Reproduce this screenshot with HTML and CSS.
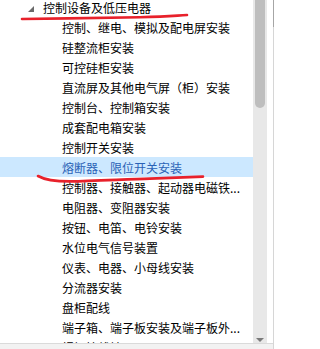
FILE: index.html
```html
<!DOCTYPE html>
<html lang="zh-CN">
<head>
<meta charset="utf-8">
<title>控制设备及低压电器</title>
<link rel="stylesheet" href="styles.css">
</head>
<body>
<div class="frame">
  <div class="main">
    <div class="content">
      <ul class="tree">
        <li class="row parent">
          <svg class="toggle" width="6" height="6" viewBox="0 0 6 6"><polygon points="6,0 6,6 0,6" /></svg>
          <span>控制设备及低压电器</span>
        </li>
        <li class="row child">控制、继电、模拟及配电屏安装</li>
        <li class="row child">硅整流柜安装</li>
        <li class="row child">可控硅柜安装</li>
        <li class="row child">直流屏及其他电气屏（柜）安装</li>
        <li class="row child">控制台、控制箱安装</li>
        <li class="row child">成套配电箱安装</li>
        <li class="row child">控制开关安装</li>
        <li class="row child selected">熔断器、限位开关安装</li>
        <li class="row child">控制器、接触器、起动器电磁铁...</li>
        <li class="row child">电阻器、变阻器安装</li>
        <li class="row child">按钮、电笛、电铃安装</li>
        <li class="row child">水位电气信号装置</li>
        <li class="row child">仪表、电器、小母线安装</li>
        <li class="row child">分流器安装</li>
        <li class="row child">盘柜配线</li>
        <li class="row child">端子箱、端子板安装及端子板外...</li>
        <li class="row child">焊铜接线端子</li>
      </ul>
      <div class="vscroll">
        <div class="thumb"></div>
        <div class="arrow-down"></div>
      </div>
    </div>
    <div class="hbar"></div>
  </div>
  <div class="edge"></div>
</div>
<svg class="marks" width="275" height="349" viewBox="0 0 275 349">
  <path d="M22 19 C 60 18.6, 110 17.8, 140 17.2 S 175 15.6, 187 15" />
  <path d="M38 176 C 45 180, 55 181.6, 72 181.4 S 125 179.4, 150 178.6 S 190 177, 203 176.6" />
</svg>
</body>
</html>
```

FILE: styles.css
```css
html, body {
  margin: 0;
  padding: 0;
  background: #ffffff;
}

body {
  width: 275px;
  height: 349px;
  overflow: hidden;
  position: relative;
  font-family: "Noto Sans CJK SC", "Microsoft YaHei", sans-serif;
  font-size: 12px;
  color: #000000;
}

.frame {
  display: flex;
  height: 349px;
}

.main {
  width: 273px;
  display: flex;
  flex-direction: column;
}

.content {
  display: flex;
  height: 343px;
  overflow: hidden;
}

.tree {
  list-style: none;
  margin: -3px 0 0 0;
  padding: 0;
  flex: 1;
  min-width: 0;
  overflow: hidden;
}

.row {
  height: 20px;
  line-height: 22px;
  white-space: nowrap;
  overflow: hidden;
}

.parent {
  display: flex;
  align-items: flex-start;
}

.toggle {
  flex: none;
  margin: 9px 9px 0 28px;
  fill: #6a6a6a;
}

.child {
  padding-left: 62px;
}

.selected {
  background: #cce8ff;
  color: #2a62b6;
}

.vscroll {
  flex: none;
  width: 14px;
  margin-right: 6px;
  background: #e8e8e8;
  display: flex;
  flex-direction: column;
  align-items: center;
  justify-content: space-between;
}

.thumb {
  width: 10px;
  height: 108px;
  background: #bebebe;
  border-radius: 0 0 5px 5px;
}

.arrow-down {
  width: 0;
  height: 0;
  border-left: 4.5px solid transparent;
  border-right: 4.5px solid transparent;
  border-top: 4px solid #7a7a7a;
  margin: 0 0 1px 0;
  position: relative;
  left: 0;
}

.hbar {
  flex: 1;
  border-top: 1px solid #dadada;
  background: #f2f2f2;
}

.edge {
  width: 1px;
  background: linear-gradient(#a6a6a6 0, #a6a6a6 27px, #d6d6d6 27px);
  margin-right: 1px;
}

.marks {
  position: absolute;
  left: 0;
  top: 0;
  pointer-events: none;
  fill: none;
  stroke: #e8212b;
  stroke-width: 2.6;
  stroke-linecap: round;
  stroke-linejoin: round;
}
```
